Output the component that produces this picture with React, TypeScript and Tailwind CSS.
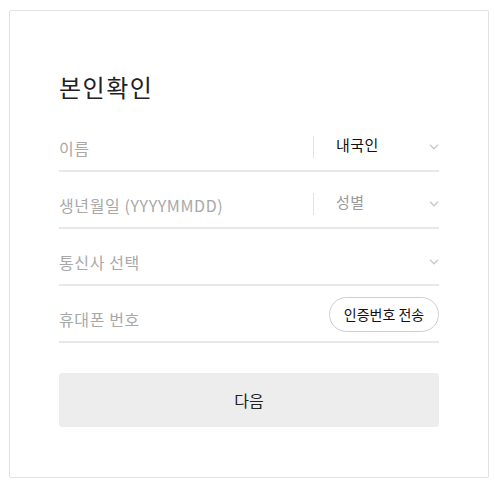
import React from "react";

const font = { fontFamily: '"Noto Sans CJK KR", "Malgun Gothic", sans-serif' };

function Chevron() {
  return (
    <svg width="10" height="6" viewBox="0 0 10 6" className="shrink-0">
      <polyline points="1,0.8 5,4.8 9,0.8" fill="none" stroke="#c8c8c8" strokeWidth="1.3" />
    </svg>
  );
}

function Row({ children }: { children: React.ReactNode }) {
  return (
    <div className="flex items-center h-[57px] pt-[10px] border-b-2 border-[#e8e8e8]">{children}</div>
  );
}

function SelectPart({ label, dark }: { label: string; dark?: boolean }) {
  return (
    <div className="flex items-center w-[126px] h-[22px] border-l border-[#e3e3e3] pl-[22px] -mt-[2px]">
      <span className={`flex-1 text-[15px] leading-[20px] -mt-[3px] tracking-[0.5px] ${dark ? "text-[#111]" : "text-[#9a9a9a]"}`}>{label}</span>
      <Chevron />
    </div>
  );
}

export default function App() {
  return (
    <div className="pl-[9px] pt-[10px] bg-white" style={font}>
      <div className="w-[480px] h-[468px] border border-[#e2e2e2] rounded-[2px] pt-[60px] px-[49px]">
        <h1 className="text-[24px] leading-[32px] text-[#222] font-normal mb-[12px] tracking-[1.5px]">본인확인</h1>
        <Row>
          <span className="flex-1 text-[16px] text-[#a8a8a8] tracking-[0.5px]">이름</span>
          <SelectPart label="내국인" dark />
        </Row>
        <Row>
          <span className="flex-1 text-[16px] text-[#a8a8a8] tracking-[0.6px]">생년월일 (YYYYMMDD)</span>
          <SelectPart label="성별" />
        </Row>
        <Row>
          <span className="flex-1 text-[16px] text-[#a8a8a8] tracking-[0.6px]">통신사 선택</span>
          <Chevron />
        </Row>
        <Row>
          <span className="flex-1 text-[16px] text-[#a8a8a8] tracking-[0.6px]">휴대폰 번호</span>
          <button className="w-[110px] h-[35px] -mt-[8px] rounded-full border border-[#cfcfcf] text-[14px] text-[#111] bg-white">
            인증번호 전송
          </button>
        </Row>
        <button className="mt-[30px] w-full h-[54px] bg-[#ededed] rounded-[3px] text-[16px] text-[#222]">다음</button>
      </div>
    </div>
  );
}
